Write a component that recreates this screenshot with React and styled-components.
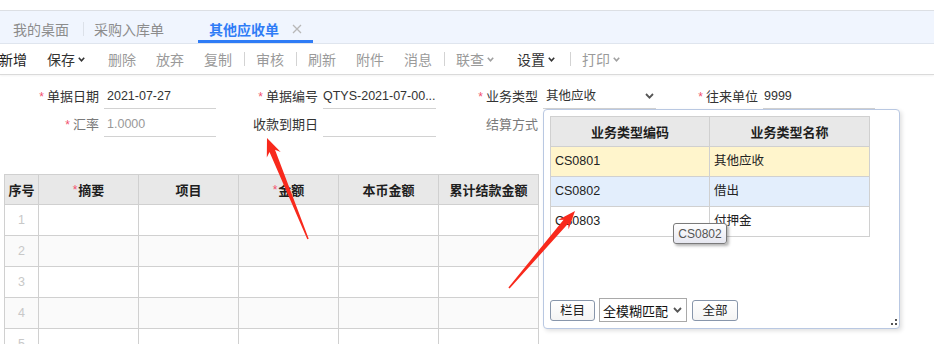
import React from 'react';
import styled, { createGlobalStyle, css } from 'styled-components';

const GlobalStyle = createGlobalStyle`
  html, body { margin: 0; padding: 0; background: #fff; }
  body {
    font-family: "Liberation Sans", "Noto Sans CJK SC", sans-serif;
    font-size: 13px;
    color: #333;
  }
  * { box-sizing: border-box; }
`;

const Page = styled.div`
  position: relative;
  width: 934px;
  height: 344px;
  overflow: hidden;
  background: #fff;
  padding-top: 10px;
`;

/* ---------- Tabs ---------- */
const TabBar = styled.div`
  display: flex;
  height: 34px;
  background: #f0f5fe;
  border-top: 1px solid #dcdfe4;
  border-bottom: 1px solid #dfe5ee;
`;

const Tab = styled.div`
  position: relative;
  display: flex;
  align-items: center;
  width: ${p => p.$w}px;
  padding-left: ${p => p.$pl}px;
  padding-top: 4px;
  font-family: "Noto Sans CJK SC", sans-serif;
  font-size: 14px;
  line-height: 1;
  color: ${p => (p.$active ? '#2f7cf6' : '#8c8c8c')};
  font-weight: ${p => (p.$active ? 600 : 400)};
  ${p => p.$sep && css`
    &::after {
      content: '';
      position: absolute;
      right: 0;
      top: 11px;
      height: 14px;
      width: 1px;
      background: #dce1e9;
    }
  `}
  ${p => p.$active && css`
    &::before {
      content: '';
      position: absolute;
      left: 0;
      right: 0;
      bottom: 0;
      height: 3px;
      background: #2f7cf6;
    }
  `}
`;

const CloseIcon = styled.svg`
  margin-left: 13px;
  width: 10px;
  height: 10px;
`;

/* ---------- Toolbar ---------- */
const Toolbar = styled.div`
  display: flex;
  align-items: center;
  height: 31px;
  border-bottom: 1px solid #dadada;
  box-shadow: 0 1px 2px rgba(0, 0, 0, 0.05);
`;

const ToolBtn = styled.div`
  display: flex;
  align-items: center;
  height: 100%;
  padding: 0 ${p => (p.$dd ? 13 : 10)}px 0 10px;
  margin-left: ${p => p.$ml || 0}px;
  font-family: "Noto Sans CJK SC", sans-serif;
  font-size: 14px;
  line-height: 1;
  color: ${p => p.$color};
  white-space: nowrap;
`;

const Chevron = styled.svg`
  margin-left: 3px;
  width: 7px;
  height: 5px;
`;

const Sep = styled.div`
  width: 1px;
  height: 14px;
  margin: 0 1.5px;
  background: #d3d3d3;
`;

/* ---------- Form ---------- */
const FormGrid = styled.div`
  display: grid;
  grid-template-columns: 104px 112px 107px 113px 107px 113px 107px 112px;
  grid-auto-rows: 25px;
  row-gap: 3px;
  padding-top: 9px;
`;

const Label = styled.div`
  display: flex;
  align-items: center;
  justify-content: flex-end;
  padding-right: 5px;
  font-size: 13px;
  line-height: 1;
  color: ${p => (p.$muted ? '#7a7a7a' : '#333')};
  white-space: nowrap;
`;

const Star = styled.span`
  color: #f2506e;
  margin-right: 3px;
  font-family: "Liberation Sans", sans-serif;
  font-size: 12px;
`;

const Input = styled.div`
  display: flex;
  align-items: center;
  justify-content: space-between;
  padding: 0 2px 0 ${p => (p.$pl ?? 3)}px;
  border-bottom: ${p => (p.$line ? '1px solid #d2d2d2' : 'none')};
  font-size: 12.5px;
  line-height: 1;
  color: ${p => (p.$muted ? '#999' : '#333')};
  white-space: nowrap;
  overflow: hidden;
`;

/* ---------- Main table ---------- */
const Grid = styled.div`
  display: grid;
  grid-template-columns: ${p => p.$cols};
  grid-template-rows: ${p => p.$head}px;
  grid-auto-rows: ${p => p.$row}px;
  border-left: 1px solid #d0d0d0;
  border-top: 1px solid #d0d0d0;
  width: max-content;
`;

const MainTableWrap = styled.div`
  margin: 37px 0 0 4px;
`;

const HeadCell = styled.div`
  display: flex;
  align-items: center;
  justify-content: center;
  background: #e8e8e8;
  border-right: 1px solid #d0d0d0;
  border-bottom: 1px solid #d0d0d0;
  font-family: "Noto Sans CJK SC", sans-serif;
  font-weight: 700;
  font-size: 13px;
  line-height: 1;
  color: #1e1e1e;
  white-space: nowrap;
`;

const HeadStar = styled.span`
  color: #f2506e;
  font-weight: 400;
  font-size: 12px;
  margin-right: 1px;
  font-family: "Liberation Sans", sans-serif;
`;

const Cell = styled.div`
  display: flex;
  align-items: center;
  justify-content: ${p => (p.$center ? 'center' : 'flex-start')};
  padding-left: ${p => (p.$center ? 0 : 4)}px;
  background: ${p => p.$bg || '#fff'};
  border-right: 1px solid #d0d0d0;
  border-bottom: 1px solid #d0d0d0;
  font-size: 12.5px;
  line-height: 1;
  color: ${p => p.$color || '#222'};
  white-space: nowrap;
`;

/* ---------- Popup ---------- */
const Popup = styled.div`
  position: absolute;
  left: 543px;
  top: 109px;
  width: 357px;
  height: 220px;
  display: flex;
  flex-direction: column;
  padding: 6px 0 0 6px;
  background: #fff;
  border: 1px solid #b9c8e2;
  border-radius: 4px;
  box-shadow: 2px 2px 4px rgba(0, 0, 0, 0.12);
`;

const PopupFooter = styled.div`
  margin-top: auto;
  display: flex;
  align-items: center;
  height: 24px;
  margin-bottom: 6px;
`;

const Btn = styled.div`
  display: flex;
  align-items: center;
  justify-content: center;
  width: ${p => p.$w}px;
  height: 21px;
  margin-left: ${p => p.$ml || 0}px;
  border: 1px solid #8896ab;
  border-radius: 3px;
  background: linear-gradient(#ffffff, #f4f4f4);
  font-family: "Noto Sans CJK SC", sans-serif;
  font-size: 12.5px;
  line-height: 1;
  color: #222;
`;

const Select = styled.div`
  display: flex;
  align-items: center;
  justify-content: space-between;
  width: 88px;
  height: 24px;
  margin-left: 4px;
  padding: 0 4px 0 3px;
  border: 1px solid #a9a9a9;
  background: #fff;
  font-family: "Noto Sans CJK SC", sans-serif;
  font-size: 13px;
  line-height: 1;
  color: #111;
`;

const Grip = styled.svg`
  position: absolute;
  right: 2px;
  bottom: 3px;
  width: 6px;
  height: 6px;
`;

const Tooltip = styled.div`
  position: absolute;
  left: 673px;
  top: 223px;
  width: 54px;
  height: 21px;
  display: flex;
  align-items: center;
  justify-content: center;
  border: 1px solid #7a7a7a;
  border-radius: 3px;
  background: linear-gradient(#ffffff, #e6e7f0);
  box-shadow: 2px 2px 3px rgba(0, 0, 0, 0.3);
  font-size: 12px;
  line-height: 1;
  color: #555;
`;

const Overlay = styled.svg`
  position: absolute;
  left: 0;
  top: 0;
  width: 934px;
  height: 344px;
  pointer-events: none;
`;

/* ---------- Icons ---------- */
const Down = ({ color }) => (
  <Chevron viewBox="0 0 7 5">
    <polyline points="0.8,0.8 3.5,3.8 6.2,0.8" fill="none" stroke={color} strokeWidth="1.6" />
  </Chevron>
);

const SelectArrow = styled.svg`
  width: 9px;
  height: 6px;
`;

const SelDown = () => (
  <SelectArrow viewBox="0 0 9 6">
    <polyline points="1,1 4.5,4.6 8,1" fill="none" stroke="#555" strokeWidth="1.8" />
  </SelectArrow>
);

const Arrow = ({ tail, tip, headLen, headW, shaftW, tailW }) => {
  const dx = tip[0] - tail[0];
  const dy = tip[1] - tail[1];
  const len = Math.hypot(dx, dy);
  const ux = dx / len;
  const uy = dy / len;
  const nx = -uy;
  const ny = ux;
  const bx = tip[0] - ux * headLen;
  const by = tip[1] - uy * headLen;
  const jx = tip[0] - ux * (headLen - 4);
  const jy = tip[1] - uy * (headLen - 4);
  const pts = [
    [tail[0] + (nx * tailW) / 2, tail[1] + (ny * tailW) / 2],
    [jx + (nx * shaftW) / 2, jy + (ny * shaftW) / 2],
    [bx + (nx * headW) / 2, by + (ny * headW) / 2],
    tip,
    [bx - (nx * headW) / 2, by - (ny * headW) / 2],
    [jx - (nx * shaftW) / 2, jy - (ny * shaftW) / 2],
    [tail[0] - (nx * tailW) / 2, tail[1] - (ny * tailW) / 2],
  ];
  return <polygon points={pts.map(p => p.map(v => v.toFixed(1)).join(',')).join(' ')} fill="#f8291c" />;
};

const DARK = '#222';
const GRAY = '#9a9a9a';

const tools = [
  { t: '新增', c: DARK, ml: -11 },
  { t: '保存', c: '#333', dd: true },
  { t: '删除', c: GRAY },
  { t: '放弃', c: GRAY },
  { t: '复制', c: GRAY },
  'sep',
  { t: '审核', c: GRAY },
  'sep',
  { t: '刷新', c: GRAY },
  { t: '附件', c: GRAY },
  { t: '消息', c: GRAY },
  'sep',
  { t: '联查', c: GRAY, dd: true },
  { t: '设置', c: '#333', dd: true },
  'sep',
  { t: '打印', c: GRAY, dd: true },
];

const mainCols = [
  { t: '序号' },
  { t: '摘要', req: true },
  { t: '项目' },
  { t: '金额', req: true },
  { t: '本币金额' },
  { t: '累计结款金额' },
];

const popupRows = [
  { code: 'CS0801', name: '其他应收', bg: '#fff5cc' },
  { code: 'CS0802', name: '借出', bg: '#e3eefc' },
  { code: 'CS0803', name: '付押金', bg: '#fff' },
];

export default function App() {
  return (
    <>
      <GlobalStyle />
      <Page>
        <TabBar>
          <Tab $w={84} $pl={13} $sep>我的桌面</Tab>
          <Tab $w={114} $pl={10}>采购入库单</Tab>
          <Tab $w={115} $pl={11} $active>
            其他应收单
            <CloseIcon viewBox="0 0 10 10">
              <path d="M1 1 L9 9 M9 1 L1 9" stroke="#b8b8b8" strokeWidth="1.3" />
            </CloseIcon>
          </Tab>
        </TabBar>

        <Toolbar>
          {tools.map((it, i) =>
            it === 'sep' ? (
              <Sep key={i} />
            ) : (
              <ToolBtn key={i} $color={it.c} $dd={it.dd} $ml={it.ml}>
                {it.t}
                {it.dd && <Down color={it.c === GRAY ? '#a0a0a0' : '#333'} />}
              </ToolBtn>
            )
          )}
        </Toolbar>

        <FormGrid>
          <Label><Star>*</Star>单据日期</Label>
          <Input $line>2021-07-27</Input>
          <Label><Star>*</Star>单据编号</Label>
          <Input $line $pl={0}>QTYS-2021-07-00...</Input>
          <Label><Star>*</Star>业务类型</Label>
          <Input $line>
            <span>其他应收</span>
            <SelDown />
          </Input>
          <Label><Star>*</Star>往来单位</Label>
          <Input $line $pl={1}>9999</Input>

          <Label $muted><Star>*</Star>汇率</Label>
          <Input $line $muted>1.0000</Input>
          <Label>收款到期日</Label>
          <Input $line />
          <Label $muted>结算方式</Label>
          <Input $line />
          <Label />
          <Input />
        </FormGrid>

        <MainTableWrap>
          <Grid $cols="34px 100px 100px 100px 100px 100px" $head={30} $row={31}>
            {mainCols.map(c => (
              <HeadCell key={c.t}>
                {c.req && <HeadStar>*</HeadStar>}
                {c.t}
              </HeadCell>
            ))}
            {[1, 2, 3, 4, 5].map(n =>
              mainCols.map((c, j) => (
                <Cell
                  key={`${n}-${j}`}
                  $center={j === 0}
                  $bg={n % 2 === 0 ? '#fafafa' : '#fff'}
                  $color="#c8c8c8"
                >
                  {j === 0 ? n : ''}
                </Cell>
              ))
            )}
          </Grid>
        </MainTableWrap>

        <Popup>
          <Grid $cols="159px 160px" $head={30} $row={30}>
            <HeadCell>业务类型编码</HeadCell>
            <HeadCell>业务类型名称</HeadCell>
            {popupRows.map(r => (
              <React.Fragment key={r.code}>
                <Cell $bg={r.bg}>{r.code}</Cell>
                <Cell $bg={r.bg}>{r.name}</Cell>
              </React.Fragment>
            ))}
          </Grid>
          <PopupFooter>
            <Btn $w={45}>栏目</Btn>
            <Select>
              <span>全模糊匹配</span>
              <SelDown />
            </Select>
            <Btn $w={46} $ml={5}>全部</Btn>
          </PopupFooter>
          <Grip viewBox="0 0 6 6">
            <rect x="4" y="0" width="2" height="2" fill="#555" />
            <rect x="0" y="4" width="2" height="2" fill="#555" />
            <rect x="4" y="4" width="2" height="2" fill="#555" />
          </Grip>
        </Popup>

        <Tooltip>CS0802</Tooltip>

        <Overlay viewBox="0 0 934 344">
          <Arrow tail={[308, 239]} tip={[267, 138]} headLen={18} headW={15} shaftW={6} tailW={1.5} />
          <Arrow tail={[509, 288]} tip={[575, 211]} headLen={18} headW={14} shaftW={6} tailW={1.5} />
        </Overlay>
      </Page>
    </>
  );
}
